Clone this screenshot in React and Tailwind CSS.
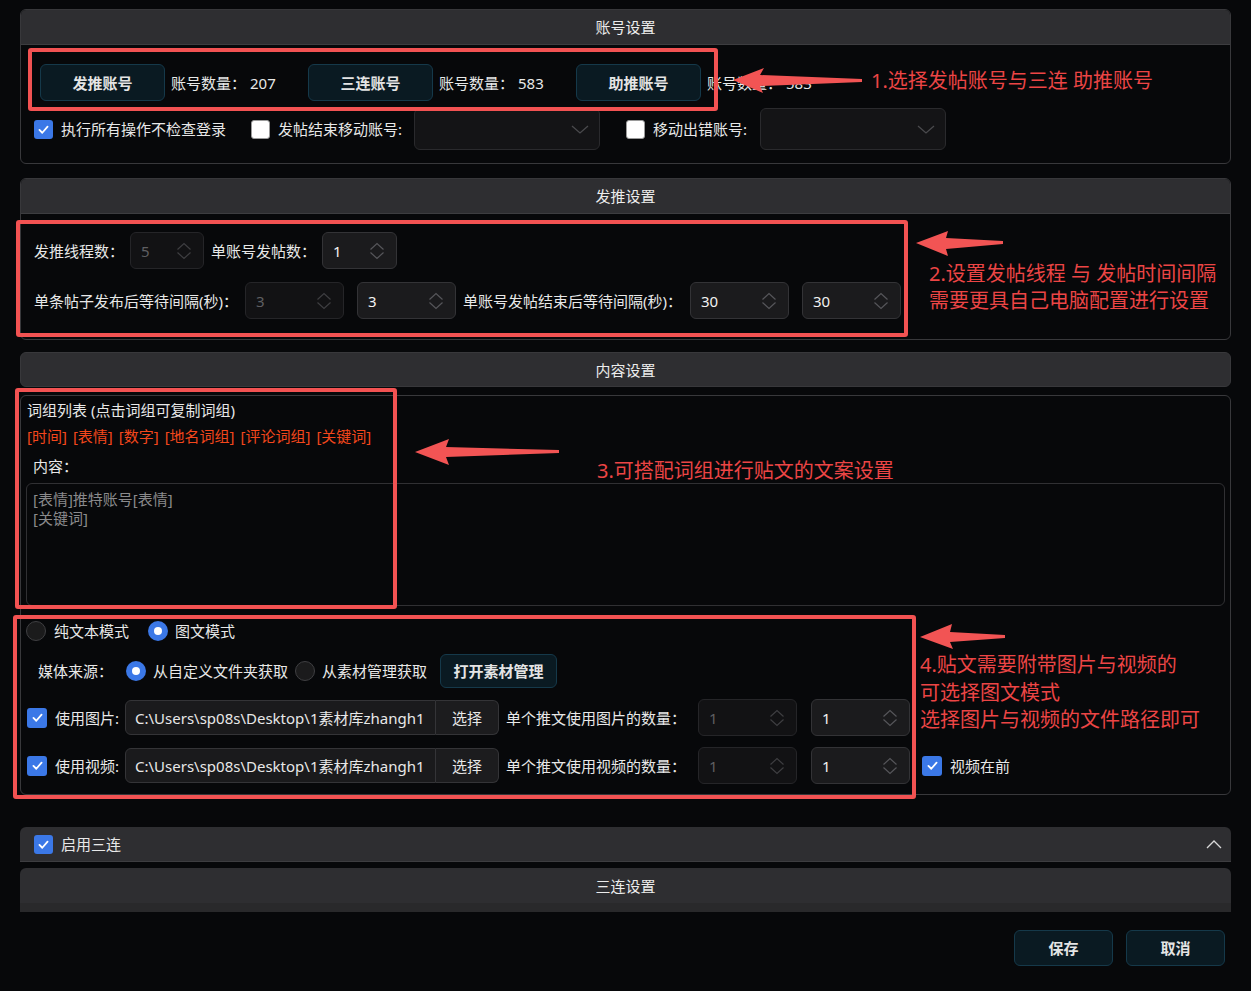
import React from 'react';

const Chk = ({ checked, size = 'w-[19px] h-[19px]' }) =>
  checked ? (
    <span className={`${size} shrink-0 rounded-[3px] bg-[#3b78e7] flex items-center justify-center`}>
      <svg viewBox="0 0 16 16" className="w-[13px] h-[13px]">
        <path d="M3 8.5 L6.5 12 L13 4.5" fill="none" stroke="#fff" strokeWidth="2.2" strokeLinecap="round" strokeLinejoin="round" />
      </svg>
    </span>
  ) : (
    <span className={`${size} block shrink-0 rounded-[3px] bg-white border border-[#9a9a9a]`} />
  );

const Radio = ({ on }) =>
  on ? (
    <span className="w-[20px] h-[20px] shrink-0 rounded-full bg-[#3b78e7] flex items-center justify-center">
      <span className="w-[8px] h-[8px] rounded-full bg-white" />
    </span>
  ) : (
    <span className="w-[20px] h-[20px] block shrink-0 rounded-full bg-[#1b1b1c] border border-[#3f3f42]" />
  );

const Spin = ({ value, w, off }) => (
  <div
    className={`${w} h-[37px] shrink-0 flex items-center justify-between rounded-md border pl-[10px] pr-[11px] ${
      off ? 'bg-[#121214] border-[#252528] text-[#5f5f62]' : 'bg-[#1b1b1d] border-[#333336] text-[#f2f2f2]'
    }`}
  >
    <span>{value}</span>
    <svg viewBox="0 0 16 18" className="w-[16px] h-[18px]">
      <path
        d="M1.5 7.5 L8 1.5 L14.5 7.5 M1.5 10.5 L8 16.5 L14.5 10.5"
        fill="none"
        stroke={off ? '#3e3e41' : '#56565a'}
        strokeWidth="1.2"
      />
    </svg>
  </div>
);

const Select = () => (
  <div className="w-[186px] h-[42px] shrink-0 flex items-center justify-end pr-[10px] rounded-md border border-[#2a2a2d] bg-[#141416]">
    <svg viewBox="0 0 18 9" className="w-[18px] h-[9px]">
      <path d="M1 1 L9 8 L17 1" fill="none" stroke="#4a4a4d" strokeWidth="1.3" />
    </svg>
  </div>
);

const Btn = ({ children, className = '' }) => (
  <button
    className={`shrink-0 flex items-center justify-center rounded-md border border-[#15394a] bg-[#0a1a22] font-bold text-[#e4e4e4] ${className}`}
  >
    {children}
  </button>
);

const Head = ({ title, className = '' }) => (
  <div className={`h-[35px] shrink-0 flex items-center justify-center bg-[#2e2e31] text-[#ececec] ${className}`}>
    {title}
  </div>
);

const Account = ({ name, count }) => (
  <>
    <Btn className="w-[125px] h-[37px]">{name}</Btn>
    <span className="w-[143px] pl-[6px] shrink-0">
      账号数量：<span className="ml-[4px]">{count}</span>
    </span>
  </>
);

const PathRow = ({ label, countLabel, extra, top }) => (
  <div className={`flex items-center h-[35px] pl-[6px] ${top}`}>
    <Chk checked size="w-[20px] h-[20px]" />
    <span className="ml-[8px] w-[70px] shrink-0">{label}</span>
    <div className="w-[311px] h-[35px] shrink-0 flex items-center pl-[9px] rounded-l-md border border-[#343437] bg-[#1a1a1c] whitespace-nowrap overflow-hidden">
      C:\Users\sp08s\Desktop\1素材库zhangh1
    </div>
    <div className="w-[63px] h-[35px] shrink-0 flex items-center justify-center rounded-r-md border border-l-0 border-[#343437] bg-[#1c1c1e]">
      选择
    </div>
    <span className="ml-[7px] w-[192px] shrink-0">{countLabel}</span>
    <Spin value="1" w="w-[99px]" off />
    <div className="ml-[14px]">
      <Spin value="1" w="w-[99px]" />
    </div>
    {extra}
  </div>
);

export default function App() {
  return (
    <div className="relative w-[1251px] h-[991px] overflow-hidden bg-[#07080a] text-[15px] leading-[20px] text-[#e8e8e8] font-['Noto_Sans','Noto_Sans_CJK_SC',sans-serif]">
      <div className="flex flex-col px-[20px] pt-[9px]">
        {/* 账号设置 */}
        <section className="h-[155px] flex flex-col rounded-md border border-[#38383b] overflow-hidden">
          <Head title="账号设置" className="border-b border-[#3d3d40]" />
          <div className="pt-[19px]">
            <div className="flex items-center h-[37px] pl-[19px]">
              <Account name="发推账号" count="207" />
              <Account name="三连账号" count="583" />
              <Account name="助推账号" count="583" />
            </div>
            <div className="flex items-center h-[42px] mt-[7px] pl-[13px]">
              <Chk checked />
              <span className="ml-[8px]">执行所有操作不检查登录</span>
              <span className="ml-[25px]"><Chk /></span>
              <span className="ml-[8px] w-[136px] shrink-0">发帖结束移动账号:</span>
              <Select />
              <span className="ml-[26px]"><Chk /></span>
              <span className="ml-[8px] w-[107px] shrink-0">移动出错账号:</span>
              <Select />
            </div>
          </div>
        </section>

        {/* 发推设置 */}
        <section className="mt-[14px] h-[162px] flex flex-col rounded-md border border-[#38383b] overflow-hidden">
          <Head title="发推设置" className="border-b border-[#3d3d40]" />
          <div className="pt-[18px] pl-[13px]">
            <div className="flex items-center h-[37px]">
              <span className="w-[96px] shrink-0">发推线程数：</span>
              <Spin value="5" w="w-[74px]" off />
              <span className="ml-[7px] w-[111px] shrink-0">单账号发帖数：</span>
              <Spin value="1" w="w-[75px]" />
            </div>
            <div className="flex items-center h-[37px] mt-[13px]">
              <span className="w-[211px] shrink-0">单条帖子发布后等待间隔(秒)：</span>
              <Spin value="3" w="w-[99px]" off />
              <div className="ml-[13px]">
                <Spin value="3" w="w-[99px]" />
              </div>
              <span className="ml-[7px] w-[227px] shrink-0">单账号发帖结束后等待间隔(秒)：</span>
              <Spin value="30" w="w-[99px]" />
              <div className="ml-[13px]">
                <Spin value="30" w="w-[99px]" />
              </div>
            </div>
          </div>
        </section>

        {/* 内容设置 */}
        <Head title="内容设置" className="mt-[12px] rounded-md border border-[#38383b]" />
        <section className="mt-[8px] h-[400px] rounded-md border border-[#38383b] pt-[4px]">
          <div className="pl-[6px] h-[20px]">词组列表 (点击词组可复制词组)</div>
          <div className="pl-[6px] h-[20px] mt-[6px] text-[#f4471c] flex gap-[6px]">
            <span>[时间]</span>
            <span>[表情]</span>
            <span>[数字]</span>
            <span>[地名词组]</span>
            <span>[评论词组]</span>
            <span>[关键词]</span>
          </div>
          <div className="pl-[12px] h-[20px] mt-[10px]">内容：</div>
          <div className="mx-[5px] mt-[7px] h-[123px] rounded-md border border-[#303033] pt-[6px] pl-[6px] text-[#8a8a8c] leading-[19px]">
            <div>[表情]推特账号[表情]</div>
            <div>[关键词]</div>
          </div>

          <div className="flex items-center h-[20px] mt-[15px] pl-[5px]">
            <Radio />
            <span className="ml-[8px]">纯文本模式</span>
            <span className="ml-[19px]"><Radio on /></span>
            <span className="ml-[7px]">图文模式</span>
          </div>

          <div className="flex items-center h-[34px] mt-[13px] pl-[17px]">
            <span className="w-[88px] shrink-0">媒体来源：</span>
            <Radio on />
            <span className="ml-[7px] w-[142px] shrink-0">从自定义文件夹获取</span>
            <Radio />
            <span className="ml-[7px] w-[118px] shrink-0">从素材管理获取</span>
            <Btn className="w-[117px] h-[34px]">打开素材管理</Btn>
          </div>

          <PathRow top="mt-[12px]" label="使用图片:" countLabel="单个推文使用图片的数量：" />
          <PathRow
            top="mt-[13px]"
            label="使用视频:"
            countLabel="单个推文使用视频的数量："
            extra={
              <>
                <span className="ml-[12px]"><Chk checked size="w-[20px] h-[20px]" /></span>
                <span className="ml-[8px]">视频在前</span>
              </>
            }
          />
        </section>

        {/* 启用三连 */}
        <div className="mt-[32px] h-[35px] flex items-center justify-between rounded-t-md bg-[#2e2e31] border-b border-[#3d3d40] pl-[14px] pr-[9px]">
          <div className="flex items-center">
            <Chk checked />
            <span className="ml-[8px]">启用三连</span>
          </div>
          <svg viewBox="0 0 16 9" className="w-[16px] h-[9px]">
            <path d="M1 8 L8 1 L15 8" fill="none" stroke="#d8d8d8" strokeWidth="1.3" />
          </svg>
        </div>

        <div className="mt-[6px] h-[44px] flex flex-col rounded-t-md overflow-hidden">
          <Head title="三连设置" />
          <div className="h-[9px] bg-[#29292b]" />
        </div>

        <div className="mt-[18px] flex justify-end gap-[13px] pr-[6px]">
          <Btn className="w-[99px] h-[36px]">保存</Btn>
          <Btn className="w-[99px] h-[36px]">取消</Btn>
        </div>
      </div>

      {/* annotations */}
      <div className="absolute left-[28px] top-[48px] w-[690px] h-[63px] border-[4px] border-[#f25252] rounded-[3px] pointer-events-none" />
      <div className="absolute left-[16px] top-[220px] w-[892px] h-[117px] border-[4px] border-[#f25252] rounded-[3px] pointer-events-none" />
      <div className="absolute left-[15px] top-[388px] w-[382px] h-[221px] border-[4px] border-[#f25252] rounded-[3px] pointer-events-none" />
      <div className="absolute left-[13px] top-[615px] w-[903px] h-[184px] border-[4px] border-[#f25252] rounded-[3px] pointer-events-none" />

      <svg className="absolute left-0 top-0 w-[1251px] h-[991px] pointer-events-none" viewBox="0 0 1251 991">
        <g fill="#f25454">
          <polygon points="733,80 764,68 760,75 862,79 862,82 760,86 763,93" />
          <polygon points="916,243 948,231 946,238 1003,241 1003,244 946,249 948,256" />
          <polygon points="415,452 449,439 446,447 559,450 559,453 446,457 449,465" />
          <polygon points="920,637 952,624 950,632 1005,635 1005,638 950,642 953,649" />
        </g>
      </svg>

      <div className="absolute left-[871px] top-[67px] text-[20px] leading-[27px] text-[#ec4545] whitespace-nowrap">
        1.选择发帖账号与三连 助推账号
      </div>
      <div className="absolute left-[929px] top-[260px] text-[20px] leading-[27px] text-[#ec4545] whitespace-nowrap">
        <div>2.设置发帖线程 与 发帖时间间隔</div>
        <div>需要更具自己电脑配置进行设置</div>
      </div>
      <div className="absolute left-[597px] top-[457px] text-[20px] leading-[27px] text-[#ec4545] whitespace-nowrap">
        3.可搭配词组进行贴文的文案设置
      </div>
      <div className="absolute left-[920px] top-[651px] text-[20px] leading-[27.5px] text-[#ec4545] whitespace-nowrap">
        <div>4.贴文需要附带图片与视频的</div>
        <div>可选择图文模式</div>
        <div>选择图片与视频的文件路径即可</div>
      </div>
    </div>
  );
}
